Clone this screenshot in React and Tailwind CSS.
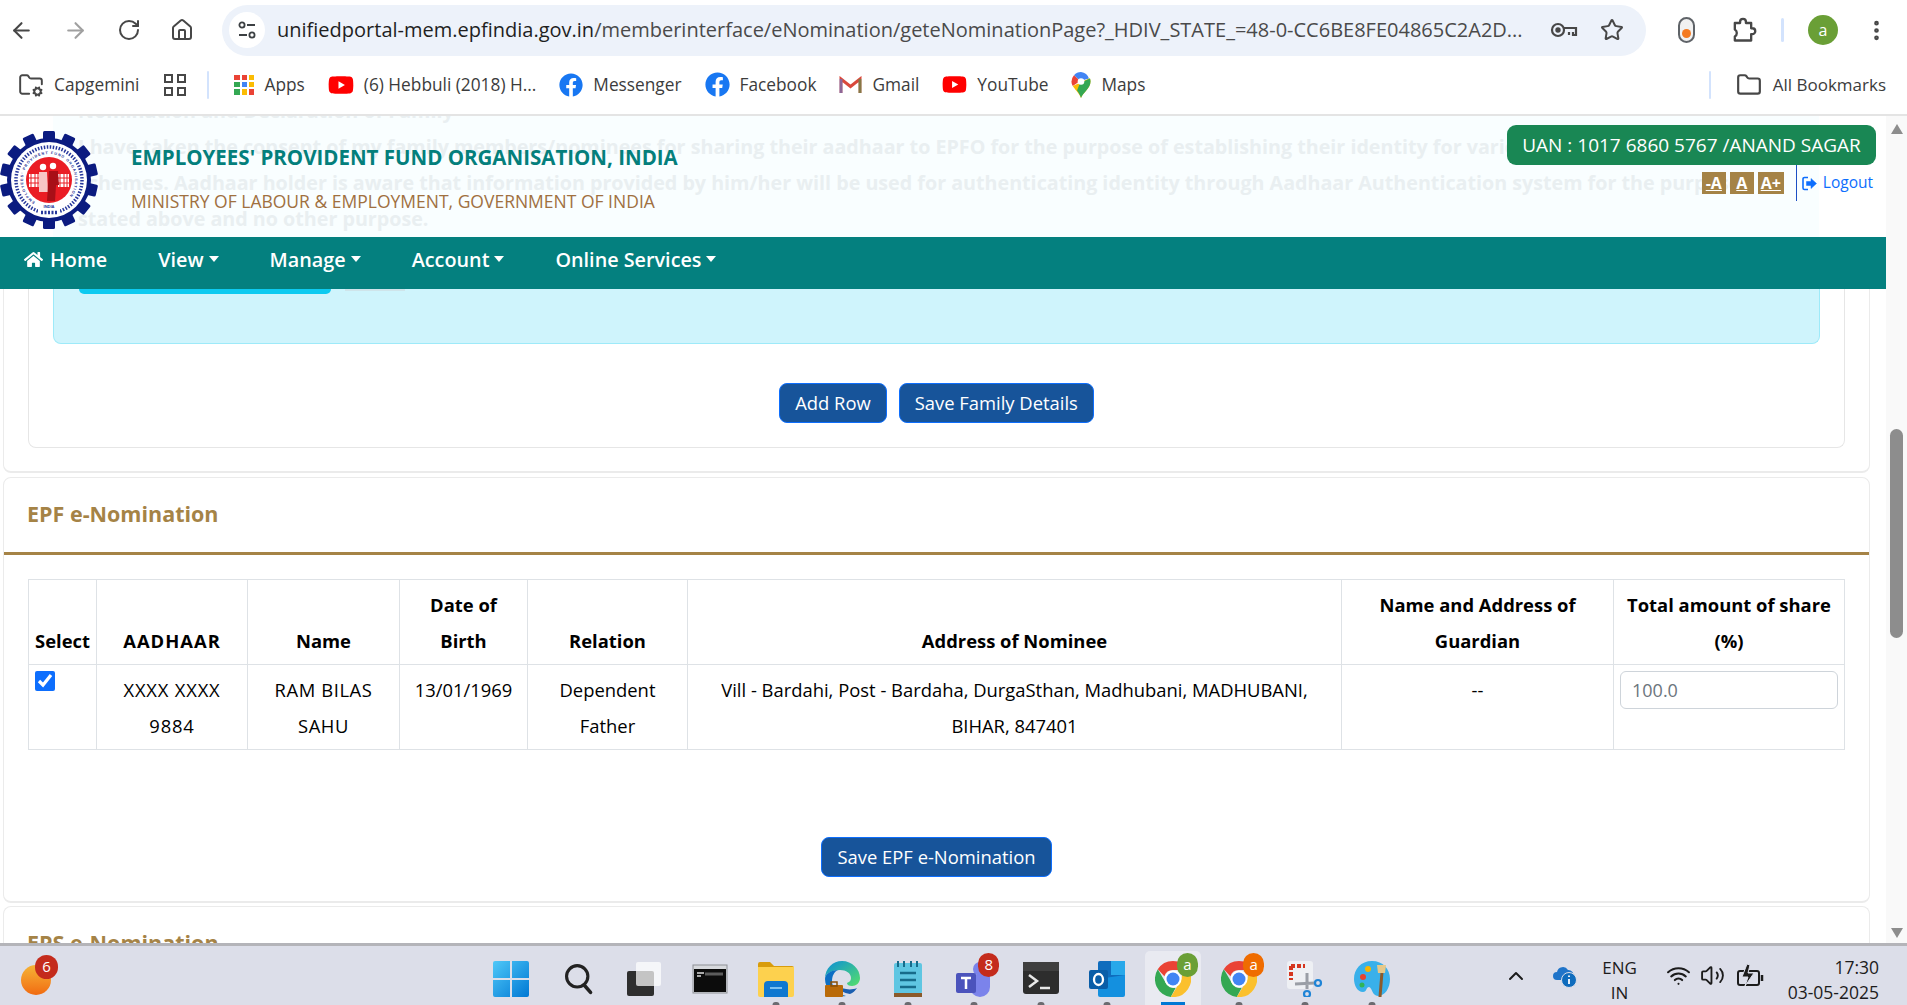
import React from 'react'
import { ArrowLeft, ArrowRight, RotateCw, Home, Star, EllipsisVertical, FolderCog, Folder, ChevronUp, Wifi, Volume2 } from 'lucide-react'
import { FaHome, FaYoutube, FaFacebook } from 'react-icons/fa'

const NAV = ['View', 'Manage', 'Account', 'Online Services']

const COLS = [68, 151, 152, 128, 160, 654, 272, 231]

const HEADS = ['Select', 'AADHAAR', 'Name', 'Date of Birth', 'Relation', 'Address of Nominee', 'Name and Address of Guardian', 'Total amount of share (%)']

function TuneIcon() {
  return (
    <svg width="20" height="20" viewBox="0 0 20 20" fill="none" stroke="#3c4043" strokeWidth="1.8">
      <circle cx="5" cy="5" r="2.6" />
      <path d="M10 5h8M2 15h8" />
      <circle cx="15" cy="15" r="2.6" />
    </svg>
  )
}

function KeyIcon() {
  return (
    <svg width="28" height="20" viewBox="0 0 28 20" fill="none" stroke="#474747" strokeWidth="2.2">
      <circle cx="8" cy="10" r="6" />
      <circle cx="8" cy="10" r="1.6" fill="#474747" />
      <path d="M14 8h12v7h-3v-3M19 12v3" />
    </svg>
  )
}

function PuzzleIcon() {
  return (
    <svg width="28" height="28" viewBox="0 0 24 24" fill="none" stroke="#474747" strokeWidth="2" strokeLinejoin="round" className="ml-[34px]">
      <path d="M5 6h4.500V5a2.500 2.500 0 0 1 5 0v1H19v4.500h1a2.500 2.500 0 0 1 0 5h-1V21H5v-3.500a3.500 3.500 0 0 0 0-6z" />
    </svg>
  )
}

function AppsGrid() {
  const colors = ['#ea4335', '#ea4335', '#fbbc04', '#34a853', '#4285f4', '#fbbc04', '#34a853', '#fbbc04', '#ea4335']
  return (
    <div className="grid grid-cols-3 gap-[2px] w-[20px] h-[20px]">
      {colors.map((c, i) => (
        <span key={i} style={{ background: c }} />
      ))}
    </div>
  )
}

function GmailIcon() {
  return (
    <svg width="23" height="18" viewBox="0 0 23 18" fill="none">
      <path d="M2 17V3l9.500 7.500L21 3v14" stroke="#d9483b" strokeWidth="3" />
      <path d="M2 17V3" stroke="#4285f4" strokeWidth="3" opacity="0.5" />
      <path d="M21 17V3" stroke="#34a853" strokeWidth="3" opacity="0.5" />
    </svg>
  )
}

function MapsIcon() {
  return (
    <svg width="20" height="26" viewBox="0 0 20 26">
      <path d="M10 0a9.500 9.500 0 0 0-7 3.200L9 9l9-2.500A9.500 9.500 0 0 0 10 0z" fill="#4285f4" />
      <path d="M3 3.200A9.500 9.500 0 0 0 .5 9.500c0 1.800.5 3.200 1.300 4.500L9 9z" fill="#ea4335" />
      <path d="M18 6.500 1.800 14c2 3.500 6 6.500 8.200 12 2-5.500 9.500-9.500 9.500-16.500 0-1-.2-2-.5-3z" fill="#fbbc04" />
      <path d="M6 18.500c1.800 2.200 3 4.500 4 7.500 2-5.500 9.500-9.500 9.500-16.500 0-1-.2-2-.5-3L9 11z" fill="#34a853" />
      <circle cx="10" cy="9.500" r="3.300" fill="#fff" />
    </svg>
  )
}

function Bookmark({ icon, label }) {
  return (
    <div className="flex items-center gap-[10px]">
      {icon}
      <span className="text-[17.300px] text-[#3c3c3c] whitespace-nowrap">{label}</span>
    </div>
  )
}

function EpfoLogo() {
  const teeth = Array.from({ length: 14 }, (_, i) => (i * 360) / 14)
  return (
    <svg width="98" height="98" viewBox="0 0 98 98" className="shrink-0">
      <defs>
        <path id="innerRing" d="M49 75a26 26 0 1 1 .01 0" />
      </defs>
      {teeth.map((a) => (
        <rect key={a} x="43" y="0" width="12" height="14" rx="1.500" fill="#0b1b80" transform={`rotate(${a} 49 49)`} />
      ))}
      <circle cx="49" cy="49" r="42" fill="#0b1b80" />
      <circle cx="49" cy="49" r="38" fill="#fff" />
      <circle cx="49" cy="49" r="33" fill="none" stroke="#27389c" strokeWidth="3.500" strokeDasharray="1.500 1.500" />
      <text fontSize="3.700" fontWeight="700" fill="#1b2f95" letterSpacing="1" fontFamily="Liberation Sans, sans-serif">
        <textPath href="#innerRing" startOffset="9%">EMPLOYEES' PROVIDENT FUND ORGANISATION</textPath>
      </text>
      <circle cx="49" cy="49" r="23" fill="#ea1c24" />
      <rect x="29" y="43" width="11" height="13" fill="#fff" />
      <path d="M31 43v13M35 43v13M38 43v13M29 47h11M29 52h11" stroke="#ea1c24" strokeWidth="1" />
      <rect x="58" y="43" width="11" height="13" fill="#fff" />
      <path d="M60 43v13M64 43v13M67 43v13M58 47h11M58 52h11" stroke="#ea1c24" strokeWidth="1" />
      <circle cx="43" cy="36" r="3.200" fill="#fff" />
      <circle cx="53" cy="35" r="3.200" fill="#fff" />
      <path d="M39 41h8l1 20h-9z" fill="#f7c6c6" />
      <path d="M49 40h9l1 14h-3l-1 16h-8l1-16z" fill="#a80f17" />
      <rect x="38" y="72" width="22" height="13" fill="#fff" />
      <text x="49" y="77" textAnchor="middle" fontSize="4" fontWeight="700" fill="#1b2f95" fontFamily="Liberation Sans, sans-serif">INDIA</text>
      <path d="M41 81.500h16" stroke="#27389c" strokeWidth="3.500" strokeDasharray="2 1.500" />
    </svg>
  )
}

function LogoutIcon() {
  return (
    <svg width="15" height="15" viewBox="0 0 15 15" fill="none" stroke="#0d6efd">
      <path d="M6 1.500H2.500a1.500 1.500 0 0 0-1.500 1.500v9a1.500 1.500 0 0 0 1.500 1.500H6" strokeWidth="1.600" />
      <path d="M4.500 5.500h4.500V2.500l5.500 5-5.500 5v-3H4.500z" fill="#0d6efd" strokeWidth="0.500" />
    </svg>
  )
}

function WinIcon() {
  return (
    <svg width="36" height="36" viewBox="0 0 36 36">
      <defs>
        <linearGradient id="winG" x1="0" y1="0" x2="1" y2="1">
          <stop offset="0" stopColor="#4fc8f8" />
          <stop offset="1" stopColor="#0078d4" />
        </linearGradient>
      </defs>
      <path d="M2 0h15v17H0V2a2 2 0 0 1 2-2zM19 0h15a2 2 0 0 1 2 2v15H19zM0 19h17v17H2a2 2 0 0 1-2-2zM19 19h17v15a2 2 0 0 1-2 2H19z" fill="url(#winG)" />
    </svg>
  )
}

function SearchIcon() {
  return (
    <svg width="36" height="36" viewBox="0 0 36 36" fill="none" stroke="#222" strokeLinecap="round" className="ml-[4px]">
      <circle cx="16" cy="15" r="12" strokeWidth="3.500" />
      <path d="M24 25l7 8" strokeWidth="4" />
    </svg>
  )
}

function TaskViewIcon() {
  return (
    <svg width="36" height="36" viewBox="0 0 36 36">
      <rect x="2" y="10" width="27" height="25" rx="2" fill="#2e2e2e" />
      <rect x="11" y="1" width="25" height="24" rx="2" fill="#fff" opacity="0.72" />
    </svg>
  )
}

function CmdIcon() {
  return (
    <svg width="36" height="32" viewBox="0 0 36 32">
      <rect width="34" height="28" x="1" y="2" fill="#d7d9dd" stroke="#8d9096" />
      <rect x="2" y="6" width="32" height="23" fill="#0c0c0c" />
      <path d="M5 10h7M5 13h4" stroke="#ddd" strokeWidth="1.300" />
      <path d="M13 11h18" stroke="#5c5c5c" strokeWidth="3" />
    </svg>
  )
}

function FolderIcon() {
  return (
    <svg width="36" height="36" viewBox="0 0 36 36">
      <path d="M0 3a2 2 0 0 1 2-2h10l4 4h18a2 2 0 0 1 2 2v5H0z" fill="#d89c0c" />
      <path d="M0 6h36v28a2 2 0 0 1-2 2H2a2 2 0 0 1-2-2z" fill="#fdd14e" />
      <path d="M6 24a4 4 0 0 1 4-4h16a4 4 0 0 1 4 4v12H6z" fill="#0f78d0" />
      <rect x="12" y="26" width="12" height="2" fill="#7cc1f0" />
    </svg>
  )
}

function EdgeIcon() {
  return (
    <svg width="36" height="36" viewBox="0 0 36 36">
      <defs>
        <linearGradient id="edgeG" x1="0" y1="0" x2="1" y2="1">
          <stop offset="0" stopColor="#0c8ed8" />
          <stop offset="1" stopColor="#55e06a" />
        </linearGradient>
      </defs>
      <path d="M1 18C1 7 9 0 18 0c10 0 18 8 18 17 0 5-4 8-8 8-3 0-5-1-5-3 3-1 4-3 4-5 0-5-5-8-11-8C9 9 1 12 1 18z" fill="url(#edgeG)" />
      <path d="M1 18c0-5 6-9 13-9-4 2-6 6-6 11 0 7 6 13 14 15C11 37 1 29 1 18z" fill="#0c6fc4" />
      <path d="M12 24c2 5 8 8 14 9 3-1 5-3 7-6-7 3-15 1-21-3z" fill="#1b5fb0" />
      <rect x="1" y="24" width="18" height="12" rx="1" fill="#b96a08" />
      <rect x="7" y="21" width="6" height="4" fill="none" stroke="#8a4f06" strokeWidth="1.500" />
    </svg>
  )
}

function NotepadIcon() {
  return (
    <svg width="30" height="36" viewBox="0 0 30 36">
      <rect x="1" y="2" width="28" height="31" rx="2" fill="#5fc6e2" />
      <rect x="1" y="32" width="28" height="4" fill="#8b5a2b" />
      <path d="M5 0v6M11 0v6M18 0v6M24 0v6" stroke="#176b8a" strokeWidth="2" />
      <path d="M7 12h16M7 19h16M7 26h16" stroke="#176b8a" strokeWidth="2.500" />
    </svg>
  )
}

function TeamsIcon() {
  return (
    <svg width="36" height="36" viewBox="0 0 36 36">
      <circle cx="24" cy="8" r="7" fill="#7b83eb" />
      <path d="M10 14h24v12a10 10 0 0 1-20 0z" fill="#7b83eb" />
      <rect x="0" y="12" width="20" height="20" rx="2" fill="#4b53bc" />
      <path d="M5 17h10M10 17v11" stroke="#fff" strokeWidth="2.500" />
    </svg>
  )
}

function TerminalIcon() {
  return (
    <svg width="36" height="34" viewBox="0 0 36 34" fill="none">
      <rect width="36" height="32" rx="3" fill="#2d2d2d" />
      <rect width="36" height="9" fill="#3f3f3f" />
      <path d="M6 13l8 6-8 6" stroke="#e8e8e8" strokeWidth="2.500" />
      <path d="M17 26h10" stroke="#e8e8e8" strokeWidth="2.500" />
    </svg>
  )
}

function OutlookIcon() {
  return (
    <svg width="36" height="36" viewBox="0 0 36 36">
      <rect x="9" y="0" width="27" height="28" rx="2" fill="#0f6cbd" />
      <rect x="22" y="0" width="14" height="14" fill="#28a8ea" />
      <path d="M9 18l27-4v20a2 2 0 0 1-2 2H11a2 2 0 0 1-2-2z" fill="#1490df" />
      <rect x="0" y="9" width="19" height="19" rx="2" fill="#0a5ea8" />
      <ellipse cx="9.500" cy="18.500" rx="4.500" ry="5.500" fill="none" stroke="#fff" strokeWidth="2.300" />
    </svg>
  )
}

function ChromeIcon() {
  return (
    <svg width="36" height="36" viewBox="0 0 36 36">
      <path d="M18 0a18 18 0 0 1 15.600 9H18a9 9 0 0 0-8.600 6.200L2.800 8.300A18 18 0 0 1 18 0z" fill="#ea4335" />
      <path d="M2.800 8.300l9 15.200a9 9 0 0 0 8.800 3.400L15.800 35.900A18 18 0 0 1 2.800 8.300z" fill="#34a853" />
      <path d="M33.600 9a18 18 0 0 1-17.800 26.900l8.900-14.600A9 9 0 0 0 24.500 9z" fill="#fbc02d" />
      <circle cx="18" cy="18" r="8.500" fill="#fff" />
      <circle cx="18" cy="18" r="6.500" fill="#4285f4" />
    </svg>
  )
}

function SnipIcon() {
  return (
    <svg width="36" height="36" viewBox="0 0 36 36" fill="none">
      <rect x="0" y="0" width="26" height="28" rx="3" fill="#eef0f4" />
      <path d="M4 5h14M4 5v14" stroke="#d5361f" strokeWidth="4" strokeDasharray="4 2" />
      <path d="M8 23l20-1M20 12v16" stroke="#9a9ea6" strokeWidth="3" />
      <circle cx="31" cy="22" r="3" stroke="#1f84d6" strokeWidth="2.200" />
      <circle cx="20" cy="33" r="3" stroke="#1f84d6" strokeWidth="2.200" />
    </svg>
  )
}

function PaintIcon() {
  return (
    <svg width="36" height="36" viewBox="0 0 36 36">
      <path d="M18 0C7 0 0 8 0 18c0 6 3 13 9 13 4 0 3-5 6-5 3 0 3 9 9 9 7 0 12-8 12-17C36 8 29 0 18 0z" fill="#39b0ea" />
      <circle cx="9" cy="16" r="3" fill="#e8442e" />
      <circle cx="14" cy="8" r="3" fill="#f7b500" />
      <circle cx="8" cy="24" r="2.500" fill="#2fb457" />
      <path d="M28 11l-2 25" stroke="#8b5a2b" strokeWidth="3" />
      <path d="M23 4h9l-1 8h-7z" fill="#e6c88a" />
    </svg>
  )
}

function OneDriveIcon() {
  return (
    <svg width="24" height="26" viewBox="0 0 24 26">
      <path d="M4 17a4 4 0 0 1 0-8 6 6 0 0 1 11-2 5 5 0 0 1 5 7v3z" fill="#1f74c9" />
      <circle cx="16" cy="17" r="7.500" fill="#0f6cbd" stroke="#dcdee8" />
      <path d="M16 16v5M16 12.500v1.500" stroke="#fff" strokeWidth="1.800" />
    </svg>
  )
}

function BatteryIcon() {
  return (
    <svg width="28" height="26" viewBox="0 0 28 26" fill="none" stroke="#1c1c1c" strokeWidth="2" className="ml-[11px]">
      <rect x="2" y="8" width="21" height="14" rx="2" />
      <path d="M26 12v6" strokeWidth="2.500" />
      <path d="M11 1L6 14h6l-3 9 9-13h-6l2-8z" fill="#1c1c1c" stroke="#dcdee9" strokeWidth="1" />
    </svg>
  )
}

function TaskIcon({ children, badge, badgeColor = 'bg-[#c42b1c]', dot, active }) {
  return (
    <div className="relative flex items-center justify-center w-[66.200px] h-[59px]">
      {active && <span className="absolute inset-x-[5px] top-[5px] bottom-0 rounded-t-[5px] bg-[#e9eaf1]" />}
      <div className="relative mt-[6px] flex items-center justify-center w-[36px] h-[36px]">
        {children}
        {badge && (
          <span className={`absolute -top-[8px] -right-[7px] flex items-center justify-center w-[21px] h-[24px] rounded-full text-white text-[15px] ${badgeColor}`}>
            {badge}
          </span>
        )}
      </div>
      {dot && <span className="absolute bottom-0 left-1/2 -translate-x-1/2 w-[7px] h-[3px] rounded-t-full bg-[#6b6b70]" />}
      {active && <span className="absolute bottom-0 left-1/2 -translate-x-1/2 w-[24px] h-[3px] bg-[#0078d4]" />}
    </div>
  )
}

export default function App() {
  return (
    <div className="flex flex-col h-screen overflow-hidden bg-white font-['Open_Sans',sans-serif] text-black">
      {/* browser toolbar */}
      <div className="flex items-center h-[55px] shrink-0 pt-[5px]">
        <div className="flex items-center gap-[29px] pl-[9px] w-[222px] text-[#474747]">
          <ArrowLeft size={25} strokeWidth={2} />
          <ArrowRight size={25} strokeWidth={2} className="text-[#a0a0a0]" />
          <RotateCw size={24} strokeWidth={2} />
          <Home size={24} strokeWidth={2} />
        </div>
        <div className="flex items-center h-[51px] w-[1424px] rounded-full bg-[#edf2fa]">
          <div className="flex items-center justify-center ml-[7px] w-[36px] h-[36px] rounded-full bg-white">
            <TuneIcon />
          </div>
          <div className="ml-[12px] w-[1249px] text-[20px] truncate whitespace-nowrap text-[#4a4a4a]">
            <span className="text-[#1f1f1f]">unifiedportal-mem.epfindia.gov.in</span>
            /memberinterface/eNomination/geteNominationPage?_HDIV_STATE_=48-0-CC6BE8FE04865C2A2D...
          </div>
          <div className="ml-[24px]"><KeyIcon /></div>
          <Star size={24} strokeWidth={2} className="ml-[22px] text-[#474747]" />
        </div>
        <div className="ml-[32px] flex items-center justify-center w-[17px] h-[26px] rounded-[9px] border-2 border-[#5f6368] bg-[#f1f1f1]">
          <span className="mt-[7px] w-[9px] h-[9px] rounded-full bg-[#f47a20]" />
        </div>
        <PuzzleIcon />
        <span className="ml-[24px] w-[3px] h-[24px] rounded bg-[#d3e3fd]" />
        <span className="ml-[24px] flex items-center justify-center w-[30px] h-[30px] rounded-full bg-[#6a9f36] text-white text-[16px]">a</span>
        <EllipsisVertical size={25} strokeWidth={2.500} className="ml-[26px] text-[#474747]" />
      </div>

      {/* bookmarks bar */}
      <div className="flex items-center h-[61px] shrink-0 border-b-2 border-[#e4e4e4] pl-[18px]">
        <Bookmark icon={<FolderCog size={26} strokeWidth={1.800} className="text-[#474747]" />} label="Capgemini" />
        <div className="ml-[25px] grid grid-cols-2 gap-[4px]">
          <span className="w-[9px] h-[9px] border-2 border-[#474747]" />
          <span className="w-[9px] h-[9px] border-2 border-[#474747]" />
          <span className="w-[9px] h-[9px] border-2 border-[#474747]" />
          <span className="w-[9px] h-[9px] border-2 border-[#474747]" />
        </div>
        <span className="ml-[21px] w-[2px] h-[28px] rounded bg-[#d3e3fd]" />
        <div className="ml-[25px] flex items-center gap-[23px]">
          <Bookmark icon={<AppsGrid />} label="Apps" />
          <Bookmark icon={<FaYoutube size={26} color="#f00" />} label="(6) Hebbuli (2018) H..." />
          <Bookmark icon={<FaFacebook size={24} color="#1877f2" />} label="Messenger" />
          <Bookmark icon={<FaFacebook size={25} color="#1877f2" />} label="Facebook" />
          <Bookmark icon={<GmailIcon />} label="Gmail" />
          <Bookmark icon={<FaYoutube size={25} color="#f00" />} label="YouTube" />
          <Bookmark icon={<MapsIcon />} label="Maps" />
        </div>
        <span className="ml-auto w-[2px] h-[28px] rounded bg-[#d3e3fd]" />
        <div className="ml-[25px] mr-[21px] flex items-center gap-[11px]">
          <Folder size={26} strokeWidth={2} className="text-[#474747]" />
          <span className="text-[17px] text-[#3c3c3c] whitespace-nowrap">All Bookmarks</span>
        </div>
      </div>

      {/* page */}
      <div className="flex flex-1 min-h-0">
        <div className="flex flex-col w-[1886px] overflow-hidden">
          {/* site header, the page scrolls under it */}
          <header className="relative flex h-[121px] shrink-0 overflow-hidden">
            <div className="absolute left-[53px] right-[67px] inset-y-0 bg-[#f9feff]" />
            <div className="absolute left-[78px] -top-[23px] w-[1740px] text-[19.700px] font-bold leading-[36px] text-[#e9eff1] whitespace-nowrap overflow-hidden">
              <div>Nomination and Declaration of Family</div>
              <div>I have taken the consent of my family members/nominees for sharing their aadhaar to EPFO for the purpose of establishing their identity for various</div>
              <div>schemes. Aadhaar holder is aware that information provided by him/her will be used for authenticating identity through Aadhaar Authentication system for the purpose</div>
              <div>stated above and no other purpose.</div>
            </div>
            <div className="relative flex items-center w-full">
              <div className="mt-[6px]"><EpfoLogo /></div>
              <div className="ml-[33px] mt-[2px]">
                <div className="text-[20.500px] font-bold leading-[28px] text-[#047f7c] whitespace-nowrap">EMPLOYEES' PROVIDENT FUND ORGANISATION, INDIA</div>
                <div className="mt-[18px] text-[17.500px] leading-[24px] text-[#a0703f] whitespace-nowrap">MINISTRY OF LABOUR &amp; EMPLOYMENT, GOVERNMENT OF INDIA</div>
              </div>
              <div className="ml-auto mr-[10px] self-start mt-[9px] flex flex-col items-end">
                <div className="flex items-center justify-center w-[369px] h-[40px] rounded-[9px] bg-[#198754] text-white text-[19px] whitespace-nowrap">
                  UAN : 1017 6860 5767 /ANAND SAGAR
                </div>
                <div className="flex items-center h-[36px]">
                  <div className="flex gap-[4px] mr-[12px]">
                    <span className="flex items-center justify-center w-[24px] h-[22px] bg-[#a58346] text-white text-[16px] font-bold underline">-A</span>
                    <span className="flex items-center justify-center w-[24px] h-[22px] bg-[#a58346] text-white text-[16px] font-bold underline">A</span>
                    <span className="flex items-center justify-center w-[26px] h-[22px] bg-[#a58346] text-white text-[16px] font-bold underline">A+</span>
                  </div>
                  <div className="flex items-center gap-[6px] h-full border-l border-[#1d4fc4] pl-[5px] pr-[3px]">
                    <LogoutIcon />
                    <span className="text-[15.500px] text-[#0d6efd]">Logout</span>
                  </div>
                </div>
              </div>
            </div>
          </header>

          {/* main nav */}
          <nav className="flex items-center h-[52px] shrink-0 bg-[#04807f] text-white text-[19.800px] font-semibold pl-[24px] pb-[7px]">
            <div className="flex items-center gap-[7px]">
              <FaHome size={19} />
              <span>Home</span>
            </div>
            <div className="flex items-center gap-[51px] ml-[51px]">
              {NAV.map((item) => (
                <div key={item} className="flex items-center gap-[5px] whitespace-nowrap">
                  <span>{item}</span>
                  <span className="mb-[2px] border-x-[5px] border-x-transparent border-t-[6px] border-t-white" />
                </div>
              ))}
            </div>
          </nav>

          {/* page body */}
          <div className="flex-1 min-h-0 overflow-hidden pl-[3px] pr-[16px]">
            {/* family details card, scrolled partly out of view */}
            <div className="border-x border-b-2 border-[#ebebeb] rounded-b-[8px] px-[24px] pb-[23px]">
              <div className="border-x border-b border-[#e6e6e6] rounded-b-[8px] px-[24px] pb-[24px]">
                <div className="relative h-[55px] bg-[#cff4fc] border-x border-b border-[#9eeaf9] rounded-b-[8px]">
                  <span className="absolute left-[25px] top-0 w-[252px] h-[5px] rounded-b-[5px] bg-[#0dcaf0]" />
                  <span className="absolute left-[291px] top-0 w-[60px] h-[2px] bg-[#cfe4ea]" />
                </div>
                <div className="flex justify-center gap-[12px] mt-[39px]">
                  <button className="h-[40px] px-[15px] rounded-[8px] bg-[#17549a] border border-[#0d6efd] text-white text-[18.400px]">Add Row</button>
                  <button className="h-[40px] px-[15px] rounded-[8px] bg-[#17549a] border border-[#0d6efd] text-white text-[18.400px]">Save Family Details</button>
                </div>
              </div>
            </div>

            {/* EPF e-Nomination card */}
            <div className="mt-[4px] border-x border-t border-b-2 border-[#ebebeb] rounded-[8px] pb-[24px]">
              <h2 className="flex items-center h-[74px] pl-[23px] pb-[2px] text-[21.500px] font-bold text-[#a58346]">EPF e-Nomination</h2>
              <div className="h-[3px] bg-[#a58346]" />
              <div className="mx-[24px] mt-[24px]">
                <table className="w-[1816px] table-fixed border-collapse text-[18.400px] leading-[36px]">
                  <colgroup>
                    {COLS.map((w, i) => (
                      <col key={i} style={{ width: w }} />
                    ))}
                  </colgroup>
                  <thead>
                    <tr className="h-[85px]">
                      {HEADS.map((h) => (
                        <th key={h} className={`border border-[#dee2e6] px-[5px] pt-[7px] pb-[5px] align-bottom text-center font-bold ${h === 'AADHAAR' ? 'tracking-[1px]' : ''}`}>{h}</th>
                      ))}
                    </tr>
                  </thead>
                  <tbody>
                    <tr className="h-[85px] align-top text-center">
                      <td className="border border-[#dee2e6] px-[6px] pt-[6px] text-left">
                        <input type="checkbox" defaultChecked className="block w-[20px] h-[20px] accent-[#0d6efd]" />
                      </td>
                      <td className="border border-[#dee2e6] px-[10px] pt-[7px] pb-[5px] tracking-[0.8px]">XXXX XXXX 9884</td>
                      <td className="border border-[#dee2e6] px-[10px] pt-[7px] pb-[5px] tracking-[0.6px]">RAM BILAS SAHU</td>
                      <td className="border border-[#dee2e6] px-[6px] pt-[7px] pb-[5px]">13/01/1969</td>
                      <td className="border border-[#dee2e6] px-[20px] pt-[7px] pb-[5px]">Dependent Father</td>
                      <td className="border border-[#dee2e6] px-[20px] pt-[7px] pb-[5px]">Vill - Bardahi, Post - Bardaha, DurgaSthan, Madhubani, MADHUBANI, BIHAR, 847401</td>
                      <td className="border border-[#dee2e6] px-[6px] pt-[7px] pb-[5px]">--</td>
                      <td className="border border-[#dee2e6] px-[6px] pt-[6px] text-left">
                        <input readOnly value="100.0" className="block w-full h-[38px] px-[11px] rounded-[6px] border border-[#ced4da] text-[18px] text-[#6c757d] outline-none" />
                      </td>
                    </tr>
                  </tbody>
                </table>
              </div>
              <div className="flex justify-center mt-[87px]">
                <button className="h-[40px] px-[15px] rounded-[8px] bg-[#17549a] border border-[#0d6efd] text-white text-[18.400px]">Save EPF e-Nomination</button>
              </div>
            </div>

            {/* next card, cut by the taskbar */}
            <div className="mt-[3px] border-x border-t border-[#ebebeb] rounded-t-[8px]">
              <h2 className="flex items-center h-[74px] pl-[23px] pb-[2px] text-[21.500px] font-bold text-[#a58346]">EPS e-Nomination</h2>
            </div>
          </div>
        </div>

        {/* scrollbar */}
        <div className="flex flex-col items-center w-[21px] bg-[#f9f9f9]">
          <span className="mt-[8px] border-x-[6px] border-x-transparent border-b-[10px] border-b-[#8d8d8d]" />
          <span className="mt-[295px] w-[13px] h-[209px] rounded-full bg-[#8d8d8d]" />
          <span className="mt-auto mb-[5px] border-x-[6px] border-x-transparent border-t-[10px] border-t-[#8d8d8d]" />
        </div>
      </div>

      {/* windows taskbar */}
      <div className="flex items-center h-[62px] shrink-0 border-t-[3px] border-[#b4b4b9] bg-[#dcdee9]">
        <div className="relative ml-[21px] w-[30px] h-[30px] mt-[8px] rounded-full bg-gradient-to-b from-[#f5b335] to-[#f06a10]">
          <span className="absolute -top-[10px] left-[14px] flex items-center justify-center w-[23px] h-[24px] rounded-full bg-[#c42b1c] text-white text-[15px]">6</span>
        </div>
        <div className="flex ml-[427px]">
          <TaskIcon><WinIcon /></TaskIcon>
          <TaskIcon><SearchIcon /></TaskIcon>
          <TaskIcon><TaskViewIcon /></TaskIcon>
          <TaskIcon><CmdIcon /></TaskIcon>
          <TaskIcon dot><FolderIcon /></TaskIcon>
          <TaskIcon dot><EdgeIcon /></TaskIcon>
          <TaskIcon dot><NotepadIcon /></TaskIcon>
          <TaskIcon dot badge="8"><TeamsIcon /></TaskIcon>
          <TaskIcon dot><TerminalIcon /></TaskIcon>
          <TaskIcon dot><OutlookIcon /></TaskIcon>
          <TaskIcon active badge="a" badgeColor="bg-[#6a9f36]"><ChromeIcon /></TaskIcon>
          <TaskIcon dot badge="a" badgeColor="bg-[#ef6c00]"><ChromeIcon /></TaskIcon>
          <TaskIcon dot><SnipIcon /></TaskIcon>
          <TaskIcon dot><PaintIcon /></TaskIcon>
        </div>
        <div className="flex items-center flex-1 text-[#1c1c1c]">
          <ChevronUp size={24} strokeWidth={2} className="ml-[99px]" />
          <div className="ml-[25px]"><OneDriveIcon /></div>
          <div className="ml-[21px] mt-[8px] w-[44px] text-center text-[17px] leading-[25px]">
            <div>ENG</div>
            <div>IN</div>
          </div>
          <Wifi size={25} strokeWidth={2} className="ml-[24px]" />
          <Volume2 size={25} strokeWidth={1.800} className="ml-[9px]" />
          <BatteryIcon />
          <div className="ml-auto mr-[28px] mt-[8px] text-right text-[17.500px] leading-[25px]">
            <div>17:30</div>
            <div>03-05-2025</div>
          </div>
        </div>
      </div>
    </div>
  )
}
